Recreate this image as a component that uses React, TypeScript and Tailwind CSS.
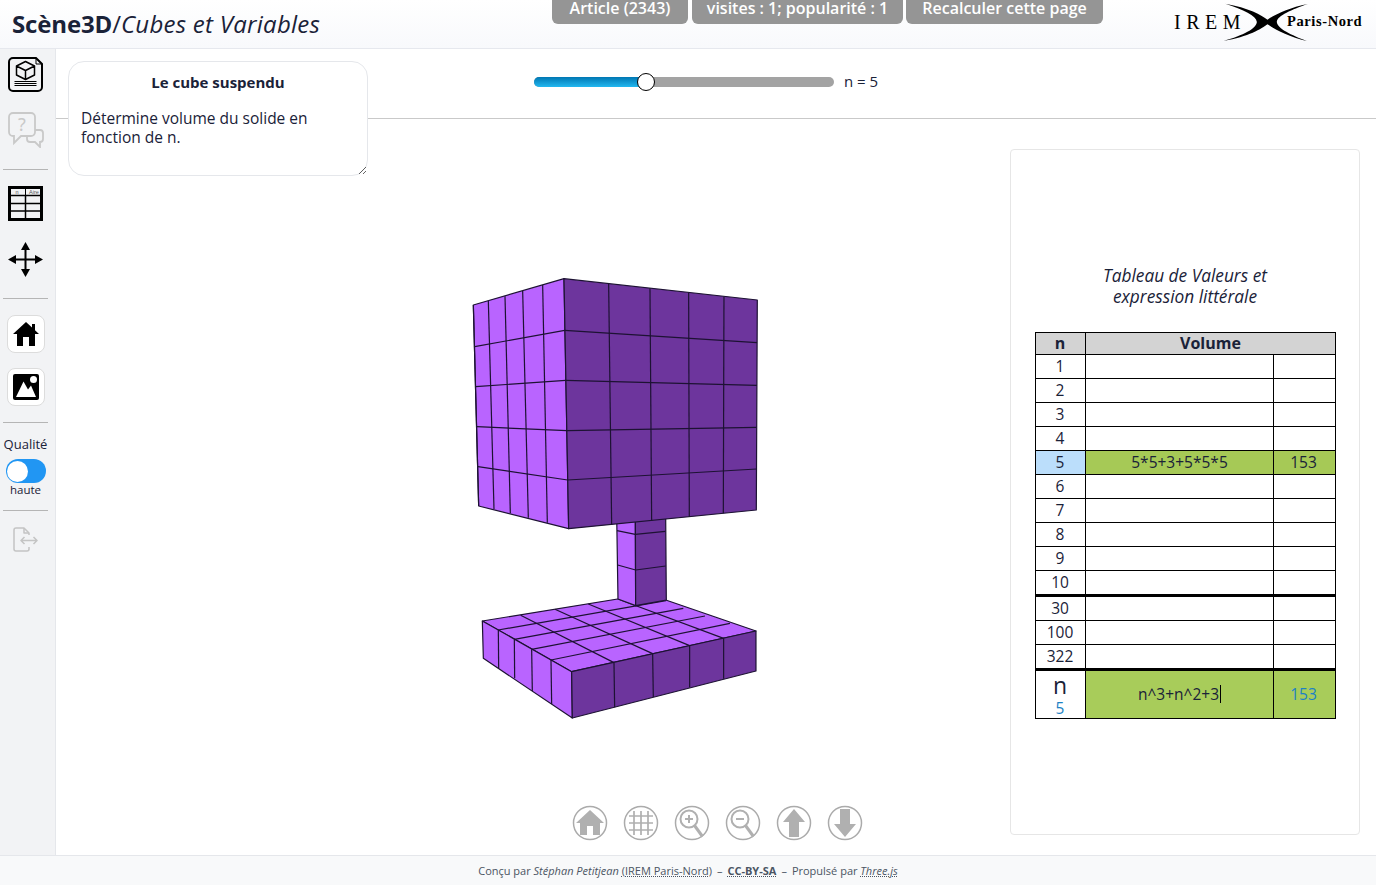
const rows = [1, 2, 3, 4, 5, 6, 7, 8, 9, 10, 30, 100, 322];

// coordinates below are read from 3x crops, hence the scale(1/3) groups
const cubeLeftV = [[40,105,56,708],[85,93,102,717],[135,79,151,730],[188,63,205,743],[248,45,262,758]];
const cubeLeftH = [[44,230,314,181],[47,350,317,331],[51,470,321,482],[54,590,323,630]];
const cubeRightV = [[446,42,455,765],[570,55,575,752],[686,68,688,741],[792,80,790,730]];
const cubeRightH = [[314,181,891,218],[317,331,891,346],[321,482,890,472],[323,630,890,597]];

const baseTopLines = [
  [85,360,588,272],[133,388,640,295],[185,418,705,318],[243,450,780,340],
  [444,267,761,385],[355,282,659,407],[255,298,548,431],[152,316,432,458],
];
const baseSideLines = [
  [85,360,86,476],[133,388,134,505],[185,418,187,543],[243,450,245,582],
  [432,458,434,592],[548,431,550,561],[659,407,659,532],[761,385,761,506],
];

function Lines({ data, w = 3.6 }: { data: number[][]; w?: number }) {
  return (
    <g stroke="#1d1233" strokeWidth={w}>
      {data.map((l, i) => (
        <line key={i} x1={l[0]} y1={l[1]} x2={l[2]} y2={l[3]} />
      ))}
    </g>
  );
}

function Solid() {
  return (
    <svg width="310" height="460" viewBox="460 270 310 460" className="block">
      <g transform="translate(470 510) scale(0.3333)" strokeLinejoin="round">
        <polygon points="37,333 305,485 858,363 535,252" fill="#b964ff" stroke="#1d1233" strokeWidth="3.6" />
        <polygon points="37,333 305,485 307,624 40,445" fill="#b964ff" stroke="#1d1233" strokeWidth="3.6" />
        <polygon points="305,485 858,363 858,483 307,624" fill="#6d359d" stroke="#1d1233" strokeWidth="3.6" />
        <Lines data={baseTopLines} />
        <Lines data={baseSideLines} />
        <polygon points="440,10 496,10 497,287 444,267" fill="#b964ff" stroke="#1d1233" strokeWidth="3.6" />
        <polygon points="496,10 587,10 589,270 497,287" fill="#6d359d" stroke="#1d1233" strokeWidth="3.6" />
        <Lines data={[[441,62,496,73],[496,73,586,64],[443,165,497,180],[497,180,587,168]]} />
      </g>
      <g transform="translate(460 270) scale(0.3333)" strokeLinejoin="round">
        <polygon points="40,105 312,26 326,776 56,708" fill="#b964ff" stroke="#1d1233" strokeWidth="3.6" />
        <polygon points="312,26 892,90 889,720 326,776" fill="#6d359d" stroke="#1d1233" strokeWidth="3.6" />
        <Lines data={cubeLeftV} />
        <Lines data={cubeLeftH} />
        <Lines data={cubeRightV} />
        <Lines data={cubeRightH} />
      </g>
    </svg>
  );
}

function DocIcon() {
  return (
    <svg width="35" height="35" viewBox="0 0 35 35" fill="none" stroke="#000">
      <path d="M5 1H28L34 7V30a4 4 0 0 1-4 4H5a4 4 0 0 1-4-4V5a4 4 0 0 1 4-4Z" strokeWidth="2" />
      <path d="M28 1v6h6" strokeWidth="1" />
      <path d="M17.500 4.500l9 4.500v9l-9 4.500-9-4.500V9zM8.500 9l9 4.500L26.500 9M17.500 13.500v9" strokeWidth="1.500" strokeLinejoin="round" />
      <path d="M6.500 24.500h22M6.500 26.500h22M6.500 28.500h22" strokeWidth="1" />
    </svg>
  );
}

function ChatIcon() {
  return (
    <svg width="36" height="36" viewBox="0 0 36 36" fill="none" stroke="#c9c9c9" strokeWidth="1.800">
      <path d="M5 1H23a4 4 0 0 1 4 4V20a4 4 0 0 1-4 4H13L6 31V24H5a4 4 0 0 1-4-4V5a4 4 0 0 1 4-4Z" />
      <path d="M27 18h5a3 3 0 0 1 3 3v6a3 3 0 0 1-3 3v5l-5-5H22a3 3 0 0 1-3-3v-3" />
      <text x="14" y="19" textAnchor="middle" fontSize="18" fill="#c9c9c9" stroke="none" fontFamily="Noto Sans, sans-serif">?</text>
    </svg>
  );
}

function TableIcon() {
  return (
    <svg width="35" height="35" viewBox="0 0 35 35" fill="none" stroke="#000">
      <rect x="1.500" y="1.500" width="32" height="32" strokeWidth="3" />
      <path d="M1 9.500h33M1 17.500h33M1 25h33M17.500 9.500v25" strokeWidth="1.500" />
      <path d="M17.500 1v9" strokeWidth="1" />
      <text x="9" y="8" textAnchor="middle" fontSize="5.500" fill="#555" stroke="none" fontFamily="Liberation Sans, sans-serif">n</text>
      <text x="26" y="8" textAnchor="middle" fontSize="5.500" fill="#555" stroke="none" fontFamily="Liberation Sans, sans-serif">Aire</text>
    </svg>
  );
}

function MoveIcon() {
  return (
    <svg width="35" height="35" viewBox="0 0 35 35" fill="#000">
      <path d="M17.500 0l4.500 8h-3.500v8.500H27V13l8 4.500-8 4.500v-3.500h-8.500V27H22l-4.500 8-4.500-8h3.500v-8.500H8V22l-8-4.500L8 13v3.500h8.500V8H13z" />
    </svg>
  );
}

function HouseIcon() {
  return (
    <svg width="26" height="24" viewBox="0 0 26 24" fill="#000">
      <path d="M13 0l6 5.500V2h3v6.300L26 12h-4v12h-6v-9h-6v9H4V12H0z" />
    </svg>
  );
}

function PictureIcon() {
  return (
    <svg width="26" height="26" viewBox="0 0 26 26">
      <rect width="26" height="26" rx="2" fill="#000" />
      <path d="M3 23L10.500 7.500l4.500 8 3-4 5 11.500z" fill="#fff" />
      <circle cx="20.500" cy="5.500" r="3.500" fill="#fff" />
    </svg>
  );
}

function ExportIcon() {
  return (
    <svg width="25" height="25" viewBox="0 0 25 25" fill="none" stroke="#c4c4c4" strokeWidth="1.500" strokeLinejoin="round">
      <path d="M16 8V6l-5-5H3a2 2 0 0 0-2 2v19a2 2 0 0 0 2 2h11a2 2 0 0 0 2-2v-2" />
      <path d="M11 1v5h5" />
      <path d="M8 13.500h16M11.500 10l-3.500 3.500 3.500 3.500M20.500 10l3.500 3.500-3.500 3.500" />
    </svg>
  );
}

function RoundIcon({ children }: { children: React.ReactNode }) {
  return (
    <svg width="36" height="36" viewBox="0 0 36 36" fill="none">
      <circle cx="18" cy="18" r="16.500" stroke="#ababab" strokeWidth="1.500" />
      {children}
    </svg>
  );
}

function BottomIcons() {
  return (
    <div className="ml-[516px] mt-[75px] flex gap-[15px]">
      <RoundIcon>
        <path d="M18 5L32 18h-4v12h-7v-9h-6v9H8V18H4z" fill="#b0b0b0" />
      </RoundIcon>
      <RoundIcon>
        <path d="M11 6v24M18 6v24M25 6v24M6 11h24M6 18h24M6 25h24" stroke="#b0b0b0" strokeWidth="1.700" />
      </RoundIcon>
      <RoundIcon>
        <circle cx="15" cy="14" r="8.500" stroke="#b0b0b0" strokeWidth="2" />
        <path d="M20.500 20.500l8 11" stroke="#b0b0b0" strokeWidth="3" />
        <path d="M11 14h8M15 10v8" stroke="#b0b0b0" strokeWidth="2" />
      </RoundIcon>
      <RoundIcon>
        <circle cx="15" cy="14" r="8.500" stroke="#b0b0b0" strokeWidth="2" />
        <path d="M20.500 20.500l8 11" stroke="#b0b0b0" strokeWidth="3" />
        <path d="M11 14h8" stroke="#b0b0b0" strokeWidth="2" />
      </RoundIcon>
      <RoundIcon>
        <path d="M18 4l11 13h-6v15H13V17H7z" fill="#b0b0b0" />
      </RoundIcon>
      <RoundIcon>
        <path d="M18 32L7 19h6V4h10v15h6z" fill="#b0b0b0" />
      </RoundIcon>
    </div>
  );
}

function Logo() {
  return (
    <div className="ml-auto mr-[14px] flex h-[44px] w-[188px] items-center font-['Liberation_Serif',serif] text-black">
      <span className="w-[48px] shrink-0 whitespace-nowrap text-[20px] tracking-[5.5px]">IREM</span>
      <svg width="88" height="40" viewBox="185 5 265 120" className="shrink-0">
        <path d="M195 10C265 22 305 45 322 58 340 45 385 22 445 10 395 28 352 45 350 65 352 85 395 105 440 122 385 110 340 85 322 72 305 85 265 110 190 122 250 105 288 85 290 65 288 45 250 28 195 10Z" fill="#000" />
      </svg>
      <span className="-ml-[23px] whitespace-nowrap text-[14.500px] font-bold tracking-[0.6px]">Paris-Nord</span>
    </div>
  );
}

export default function App() {
  return (
    <div className="flex h-[885px] flex-col overflow-hidden bg-white font-['Open_Sans',sans-serif] text-[16px] text-[#1a2238]">
      <header className="flex h-[49px] shrink-0 border-b border-[#e6e8ee] bg-gradient-to-b from-white to-[#f8f9fc]">
        <div className="w-[552px] shrink-0 whitespace-nowrap pl-3 pt-[6px] text-[24px] leading-[36px]">
          <span className="font-bold tracking-[-0.15px]">Scène3D</span>/<span className="italic tracking-[0.26px]">Cubes et Variables</span>
        </div>
        <div className="flex gap-1">
          <div className="h-6 w-[136px] rounded-b-md bg-[#959595] text-center font-semibold leading-4 text-white">Article (2343)</div>
          <div className="h-6 w-[211px] rounded-b-md bg-[#959595] text-center font-semibold leading-4 text-white">visites : 1; popularité : 1</div>
          <div className="-ml-px h-6 w-[197px] rounded-b-md bg-[#959595] text-center font-semibold leading-4 text-white">Recalculer cette page</div>
        </div>
        <Logo />
      </header>

      <div className="flex min-h-0 flex-1">
        <aside className="flex w-[56px] shrink-0 flex-col items-center border-r border-[#e5e7eb] bg-[#f2f3f5] pr-1 pt-2">
          <DocIcon />
          <div className="mt-[20px]"><ChatIcon /></div>
          <div className="mt-[21px] h-px w-[45px] bg-[#b5b5b5]" />
          <div className="mt-[16px]"><TableIcon /></div>
          <div className="mt-[21px]"><MoveIcon /></div>
          <div className="mt-[21px] h-px w-[45px] bg-[#b5b5b5]" />
          <button className="mt-[16px] flex h-[38px] w-[38px] items-center justify-center rounded-lg border border-[#dcdcdc] bg-white"><HouseIcon /></button>
          <button className="mt-[15px] flex h-[38px] w-[38px] items-center justify-center rounded-lg border border-[#dcdcdc] bg-white"><PictureIcon /></button>
          <div className="mt-[16px] h-px w-[45px] bg-[#b5b5b5]" />
          <div className="mt-[12px] text-[13px] leading-[18px]">Qualité</div>
          <div className="mt-[6px] flex h-6 w-10 items-center rounded-full bg-[#2196f3] px-px">
            <div className="h-[21px] w-[21px] rounded-full bg-white" />
          </div>
          <div className="text-[11.500px] leading-[14px]">haute</div>
          <div className="mt-[13px] h-px w-[45px] bg-[#b5b5b5]" />
          <div className="mt-[16px]"><ExportIcon /></div>
        </aside>

        <main className="relative flex min-w-0 flex-1 flex-col">
          <div className="flex h-[70px] shrink-0 items-center border-b border-[#c9c9c9] pb-[4px] pl-[478px]">
            <div className="relative flex h-[10px] w-[300px] rounded-full bg-[#a3a3a3]">
              <div className="h-full w-[112px] rounded-l-full bg-gradient-to-b from-[#0077b3] to-[#22b8f0]" />
              <div className="absolute -top-1 left-[103px] h-[18px] w-[18px] rounded-full border border-black bg-white" />
            </div>
            <span className="ml-[10px] text-[15px]">n = 5</span>
          </div>

          <div className="flex min-h-0 flex-1">
            <div className="w-[954px] shrink-0">
              <div className="ml-[404px] mt-[151px]"><Solid /></div>
              <BottomIcons />
            </div>
            <section className="mt-[30px] h-[686px] w-[350px] shrink-0 rounded border border-[#e6e6e6] pt-[115px]">
              <div className="mx-auto w-[220px] text-center text-[17.300px] italic leading-[21px]">
                Tableau de Valeurs et expression littérale
              </div>
              <table className="ml-[24px] mt-[25px] w-[300px] table-fixed border-collapse text-center text-[15.500px] leading-[20px]">
                <colgroup>
                  <col className="w-[50px]" />
                  <col className="w-[188px]" />
                  <col className="w-[62px]" />
                </colgroup>
                <thead>
                  <tr className="bg-[#d3d3d3]">
                    <th className="h-[22px] border border-black p-0 pb-px pr-px text-[16px] font-bold leading-[18px]">n</th>
                    <th colSpan={2} className="h-[22px] border border-black p-0 pb-px text-[16px] font-bold leading-[18px]">Volume</th>
                  </tr>
                </thead>
                <tbody>
                  {rows.map((n) => {
                    const active = n === 5;
                    const thick = n === 10 || n === 322;
                    const tall = n === 10 || n === 30 || n === 322;
                    const cell = `${tall ? "h-[25px]" : "h-6"} border-x border-t border-black p-0 pb-[2px] ${thick ? "" : "border-b"}`;
                    return (
                      <tr key={n} className={thick ? "border-b-[3px] border-black" : ""}>
                        <td className={`${cell} pr-px ${active ? "bg-[#bbdefb]" : ""}`}>{n}</td>
                        <td className={`${cell} ${active ? "bg-[#a6c956]" : ""}`}>{active ? "5*5+3+5*5*5" : ""}</td>
                        <td className={`${cell} pr-[2px] ${active ? "bg-[#a6c956]" : ""}`}>{active ? "153" : ""}</td>
                      </tr>
                    );
                  })}
                  <tr>
                    <td className="h-[49px] border border-black p-0 pr-px">
                      <div className="text-[23px] leading-[27px]">n</div>
                      <div className="leading-[19px] text-[#1c82c4]">5</div>
                    </td>
                    <td className="border border-black bg-[#a8cc5a] p-0 pb-[2px]">
                      n^3+n^2+3<span className="-mb-[3px] ml-px inline-block h-[18px] w-px bg-black" />
                    </td>
                    <td className="border border-black bg-[#a8cc5a] p-0 pb-[2px] pr-[2px] text-[#1c82c4]">153</td>
                  </tr>
                </tbody>
              </table>
            </section>
          </div>

          <div className="absolute left-[12px] top-[12px] h-[115px] w-[300px] resize overflow-hidden rounded-2xl border border-[#e5e7eb] bg-white px-3 pt-[10px]">
            <div className="text-center text-[15px] font-bold leading-[20px]">Le cube suspendu</div>
            <p className="mt-[17px] text-[15.500px] leading-[19px]">Détermine volume du solide en fonction de n.</p>
          </div>
        </main>
      </div>

      <footer className="flex h-[30px] shrink-0 items-center justify-center whitespace-nowrap border-t border-[#e5e7eb] bg-[#f8f9fa] pt-px text-[11px] text-[#4b5563]">
        <span>Conçu par <i>Stéphan Petitjean</i> <span className="underline decoration-dotted">(IREM Paris-Nord)</span></span>
        <span className="mx-[5px]">–</span>
        <span className="font-bold underline decoration-dotted">CC-BY-SA</span>
        <span className="mx-[5px]">–</span>
        <span>Propulsé par <i className="underline decoration-dotted">Three.js</i></span>
      </footer>
    </div>
  );
}
